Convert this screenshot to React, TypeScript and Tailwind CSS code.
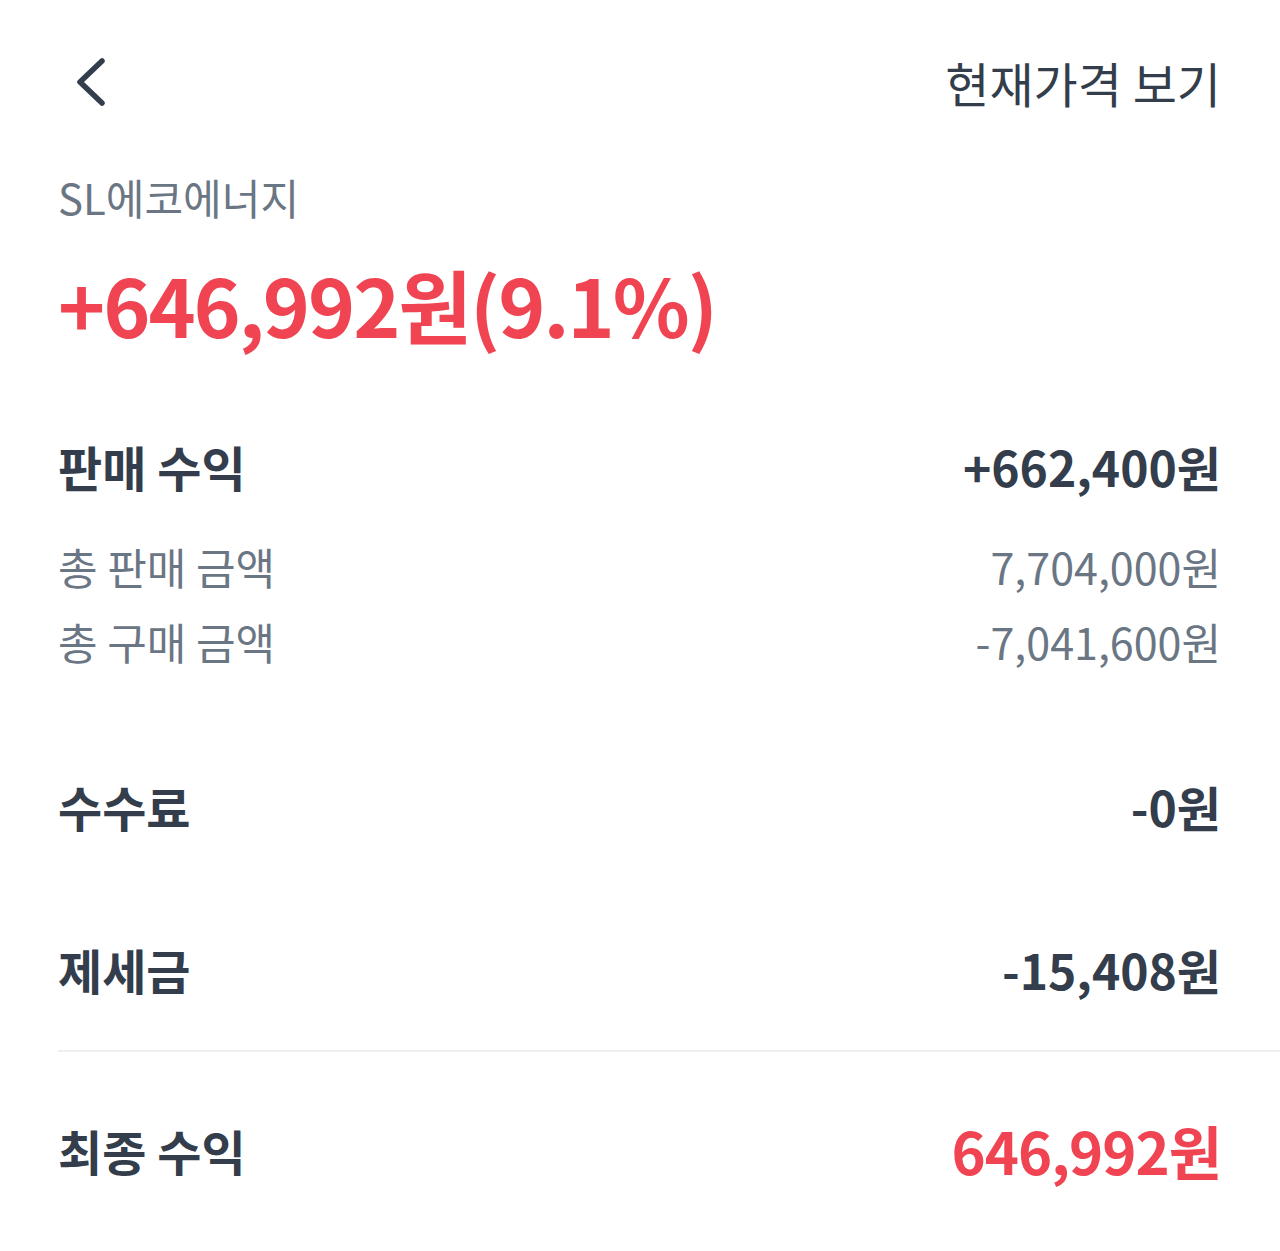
import React from "react";

const font = { fontFamily: '"Noto Sans CJK KR", "Noto Sans", sans-serif' };

export default function App() {
  return (
    <div className="w-[1280px] h-[1251px] bg-white pl-[58px] pr-[59px] overflow-hidden" style={font}>
      <div className="h-[164px] flex items-center justify-between">
        <svg width="40" height="56" viewBox="0 0 40 56" className="ml-[14px]">
          <path d="M30 7 L8 28 L30 49" fill="none" stroke="#333d4b" strokeWidth="5.5" strokeLinecap="round" strokeLinejoin="round" />
        </svg>
        <span className="text-[48px] text-[#333d4b] leading-none">현재가격 보기</span>
      </div>
      <div className="h-[66px] flex items-center text-[42px] text-[#6b7684] leading-none">SL에코에너지</div>
      <div className="h-[146px] flex items-center text-[80px] font-bold text-[#f04452] leading-none tracking-[-2px]">+646,992원(9.1%)</div>

      <div className="mt-[45px] h-[90px] flex items-center justify-between text-[48px] font-bold text-[#333d4b] leading-none">
        <span>판매 수익</span>
        <span>+662,400원</span>
      </div>
      <div className="mt-[18px] h-[75px] flex items-center justify-between text-[43px] text-[#6b7684] leading-none">
        <span>총 판매 금액</span>
        <span>7,704,000원</span>
      </div>
      <div className="h-[75px] flex items-center justify-between text-[43px] text-[#6b7684] leading-none">
        <span>총 구매 금액</span>
        <span>-7,041,600원</span>
      </div>

      <div className="mt-[82px] h-[90px] flex items-center justify-between text-[48px] font-bold text-[#333d4b] leading-none">
        <span>수수료</span>
        <span>-0원</span>
      </div>
      <div className="mt-[73px] h-[90px] flex items-center justify-between text-[48px] font-bold text-[#333d4b] leading-none">
        <span>제세금</span>
        <span>-15,408원</span>
      </div>
      <div className="mt-[36px] h-[2px] bg-[#eceef1] mr-[-59px]" />
      <div className="mt-[53px] h-[90px] flex items-center justify-between font-bold leading-none">
        <span className="text-[48px] text-[#333d4b]">최종 수익</span>
        <span className="text-[58px] text-[#f04452] tracking-[-1px]">646,992원</span>
      </div>
    </div>
  );
}
